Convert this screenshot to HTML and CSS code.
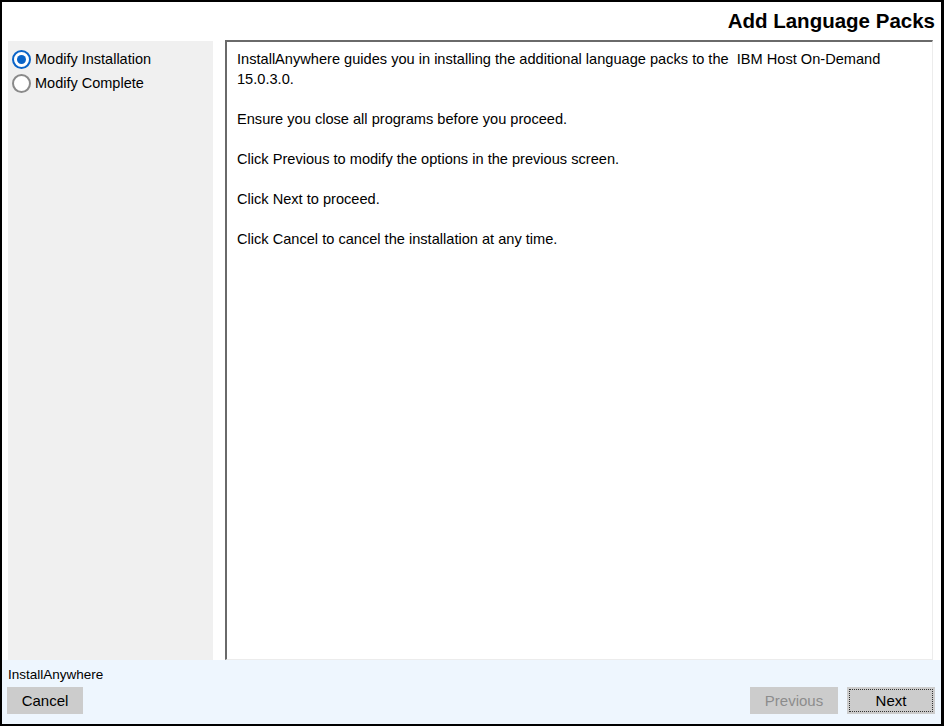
FILE: index.html
```html
<!DOCTYPE html>
<html>
<head>
<meta charset="utf-8">
<link rel="stylesheet" href="styles.css">
</head>
<body>
<div class="frame">
  <div class="header">
    <h1 class="title">Add Language Packs</h1>
  </div>
  <div class="main">
    <div class="steps">
      <div class="step">
        <span class="radio radio-on"></span>
        <span class="step-label">Modify Installation</span>
      </div>
      <div class="step">
        <span class="radio"></span>
        <span class="step-label">Modify Complete</span>
      </div>
    </div>
    <div class="content">
      <p class="para">InstallAnywhere guides you in installing the additional language packs to the &nbsp;IBM Host On-Demand 15.0.3.0.</p>
      <p class="para">Ensure you close all programs before you proceed.</p>
      <p class="para">Click Previous to modify the options in the previous screen.</p>
      <p class="para">Click Next to proceed.</p>
      <p class="para">Click Cancel to cancel the installation at any time.</p>
    </div>
  </div>
  <div class="footer">
    <div class="brand">InstallAnywhere</div>
    <div class="buttons">
      <button class="btn">Cancel</button>
      <div class="nav">
        <button class="btn btn-disabled">Previous</button>
        <button class="btn btn-focus"><span class="focus-ring">Next</span></button>
      </div>
    </div>
  </div>
</div>
</body>
</html>
```

FILE: styles.css
```css
html, body {
  margin: 0;
  padding: 0;
  background: #ffffff;
}
.frame {
  width: 944px;
  height: 726px;
  box-sizing: border-box;
  border-style: solid;
  border-color: #000000;
  border-width: 2px 3px 2px 2px;
  display: flex;
  flex-direction: column;
  font-family: "Liberation Sans", Arial, sans-serif;
  color: #000000;
  background: #ffffff;
}
.header {
  height: 38px;
  display: flex;
  justify-content: flex-end;
  align-items: flex-start;
}
.title {
  margin: 8px 6px 0 0;
  font-size: 20.5px;
  font-weight: bold;
  line-height: 22px;
}
.main {
  flex: 1;
  display: flex;
  align-items: stretch;
  min-height: 0;
}
.steps {
  width: 205px;
  margin: 1px 0 0 6px;
  background: #f0f0f0;
  padding-top: 6px;
  box-sizing: border-box;
}
.step {
  display: flex;
  align-items: center;
  height: 24px;
  padding-left: 4px;
}
.radio {
  width: 15px;
  height: 15px;
  border-radius: 50%;
  border: 2px solid #8a8a8a;
  background: #ffffff;
  box-sizing: content-box;
  margin-right: 4px;
  position: relative;
}
.radio-on {
  border-color: #0a64c8;
}
.radio-on::after {
  content: "";
  position: absolute;
  left: 3px;
  top: 3px;
  width: 9px;
  height: 9px;
  border-radius: 50%;
  background: #0a64c8;
}
.step-label {
  font-size: 14.5px;
  line-height: 18px;
}
.content {
  margin-left: 12px;
  width: 708px;
  box-sizing: border-box;
  border-style: solid;
  border-width: 2px 1px 1px 2px;
  border-color: #6a6a6a #ececec #ececec #6a6a6a;
  padding: 7px 10px 0 10px;
  background: #ffffff;
}
.para {
  margin: 0 0 20px 0;
  font-size: 14.6px;
  line-height: 20px;
  max-width: 660px;
}
.footer {
  height: 64px;
  background: #eef6fe;
  display: flex;
  flex-direction: column;
  padding: 6px 6px 0 5px;
  box-sizing: border-box;
}
.brand {
  font-size: 13.5px;
  line-height: 18px;
  padding-left: 1px;
  margin-bottom: 3px;
}
.buttons {
  display: flex;
  justify-content: space-between;
  align-items: center;
}
.nav {
  display: flex;
  gap: 9px;
}
.btn {
  font-family: "Liberation Sans", Arial, sans-serif;
  font-size: 15px;
  color: #000000;
  background: #cccccc;
  border: none;
  height: 27px;
  width: 76px;
  padding: 0;
  margin: 0;
}
.nav .btn {
  width: 88px;
}
.btn-disabled {
  color: #8c8c8c;
}
.btn-focus {
  padding: 2px;
  box-sizing: border-box;
}
.focus-ring {
  display: flex;
  align-items: center;
  justify-content: center;
  width: 100%;
  height: 100%;
  box-sizing: border-box;
  border: 1px dotted #333333;
}
```
